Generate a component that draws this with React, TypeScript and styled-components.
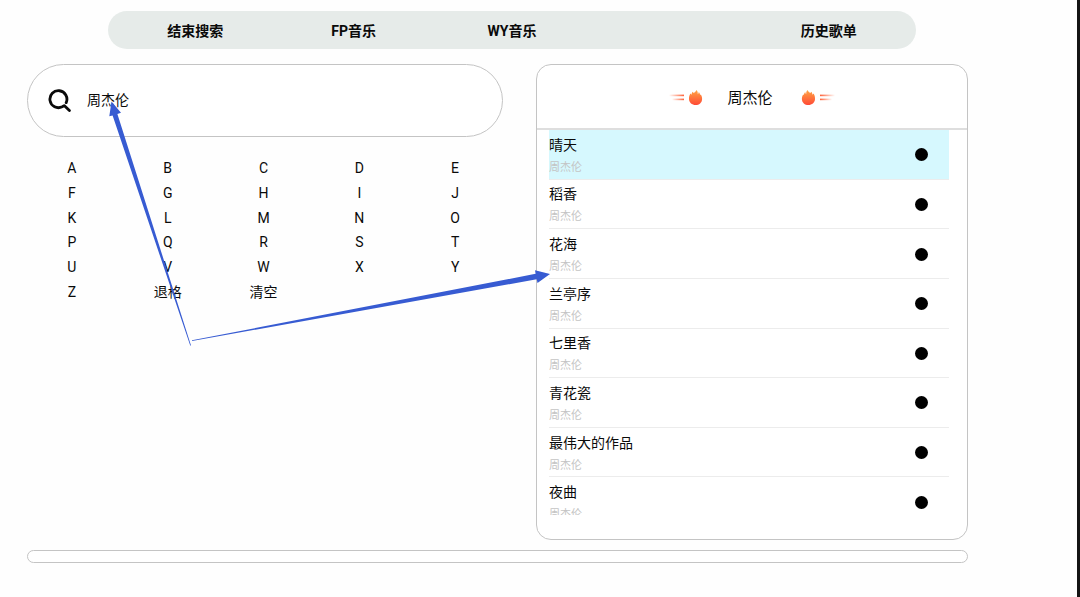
import React, { useState } from "react";
import styled, { createGlobalStyle } from "styled-components";

const GlobalStyle = createGlobalStyle`
  *, *::before, *::after { box-sizing: border-box; }
  body {
    margin: 0;
    background: #fefefe;
    color: #0a0a0a;
    font-family: Roboto, "Noto Sans CJK SC", sans-serif;
    font-size: 14px;
    line-height: 20px;
  }
  button, input { font: inherit; color: inherit; }
`;

const Page = styled.main`
  position: relative;
  min-height: 100vh;
  padding: 11px 109px 24px 24px;
  border-right: 3px solid #141414;
`;

const PlainButton = styled.button`
  padding: 0;
  border: 0;
  background: transparent;
  cursor: pointer;
`;

const NavBar = styled.nav`
  display: grid;
  grid-template-columns: repeat(5, 1fr);
  align-items: center;
  height: 38px;
  margin: 0 52px 0 84px;
  padding: 2px 8px 0;
  border-radius: 19px;
  background: #e6ebe9;
`;

const NavButton = styled(PlainButton)<{ $column: number }>`
  grid-column: ${(p) => p.$column};
  font-weight: 700;
`;

const Columns = styled.div`
  display: grid;
  grid-template-columns: 479fr 432fr;
  gap: 33px;
  margin-top: 15px;
`;

const SearchBox = styled.label`
  display: flex;
  align-items: center;
  gap: 15px;
  height: 73px;
  margin: 0 0 0 3px;
  padding: 0 20px;
  border: 1px solid #c4c4c4;
  border-radius: 37px;
  background: #ffffff;
`;

const SearchInput = styled.input`
  flex: 1;
  min-width: 0;
  padding: 0 0 2px;
  border: 0;
  outline: 0;
  background: transparent;
`;

const Keyboard = styled.div`
  display: grid;
  grid-template-columns: repeat(5, 1fr);
  grid-template-rows: repeat(6, 1fr);
  height: 148px;
  margin-top: 19px;
`;

const Results = styled.section`
  height: 476px;
  border: 1px solid #c4c4c4;
  border-radius: 15px;
  background: #ffffff;
`;

const ResultsHeader = styled.header`
  display: flex;
  align-items: center;
  justify-content: center;
  gap: 24px;
  height: 65px;
  padding-top: 2px;
  border-bottom: 2px solid #dedede;
`;

const ResultsTitle = styled.h2`
  margin: 0;
  padding-right: 4px;
  font-size: 15px;
  font-weight: 400;
`;

const SongViewport = styled.div`
  height: 385px;
  margin: 0 18px 0 12px;
  overflow: hidden;
`;

const SongList = styled.ul`
  display: grid;
  grid-template-rows: repeat(8, 1fr);
  height: 397px;
  margin: 0;
  padding: 0;
  list-style: none;
`;

const SongRow = styled.li<{ $active: boolean }>`
  display: flex;
  align-items: center;
  justify-content: space-between;
  padding: 1px 21px 0 0;
  border-bottom: 1px solid #ececec;
  background: ${(p) => (p.$active ? "#d6f8fe" : "transparent")};
`;

const SongName = styled.div`
  line-height: 26px;
`;

const SongArtist = styled.div`
  color: #c4c4c4;
  font-size: 11px;
  line-height: 20px;
`;

const DotButton = styled(PlainButton)`
  width: 13px;
  height: 13px;
  border-radius: 50%;
  background: #000000;
`;

const PlayerBar = styled.div`
  height: 13px;
  margin: 10px 0 0 3px;
  border: 1px solid #c4c4c4;
  border-radius: 7px;
  background: #ffffff;
`;

const Annotation = styled.svg`
  position: absolute;
  top: 0;
  left: 0;
  pointer-events: none;
`;

const FlameSvg = styled.svg<{ $flip?: boolean }>`
  transform: ${(p) => (p.$flip ? "scaleX(-1)" : "none")};
`;

function Flame({ id, flip }: { id: string; flip?: boolean }) {
  return (
    <FlameSvg $flip={flip} width="34" height="20" viewBox="0 0 34 20" aria-hidden="true">
      <defs>
        <linearGradient id={`${id}-fire`} x1="0" y1="0" x2="0" y2="1">
          <stop offset="0" stopColor="#ffa544" />
          <stop offset="1" stopColor="#ff4a36" />
        </linearGradient>
        <linearGradient id={`${id}-trail`}>
          <stop offset="0" stopColor="#ff6238" stopOpacity="0" />
          <stop offset="1" stopColor="#ff6238" />
        </linearGradient>
      </defs>
      <rect x="0" y="6.600" width="15" height="1.600" fill={`url(#${id}-trail)`} />
      <rect x="3" y="10.600" width="12" height="1.600" fill={`url(#${id}-trail)`} />
      <path
        d="M27.600 2c1 1.200 1.300 2.500 1.200 4.200.6-.5.9-1.200 1-2.200.8.900 1.200 1.800 1.300 3.100l.8-.5c.8 1.500 1.300 3 1.200 4.600-.2 3.500-2.900 5.800-6.500 5.800s-6.400-2.400-6.600-5.800c-.1-2.200.4-4.200 1.500-5.700l1 1.300c.2-1.500.6-2.300 1.300-3.100l.8 1.300c1.200-.6 2.300-1.600 3-3z"
        fill={`url(#${id}-fire)`}
      />
    </FlameSvg>
  );
}

const tabs = [
  { label: "结束搜索", column: 1 },
  { label: "FP音乐", column: 2 },
  { label: "WY音乐", column: 3 },
  { label: "历史歌单", column: 5 },
];

const keys = [..."ABCDEFGHIJKLMNOPQRSTUVWXYZ", "退格", "清空"];

const songs = ["晴天", "稻香", "花海", "兰亭序", "七里香", "青花瓷", "最伟大的作品", "夜曲"];

export default function App() {
  const [query, setQuery] = useState("周杰伦");
  const [active, setActive] = useState(0);

  const press = (key: string) => {
    if (key === "清空") setQuery("");
    else if (key === "退格") setQuery(query.slice(0, -1));
    else setQuery(query + key);
  };

  return (
    <Page>
      <GlobalStyle />
      <NavBar>
        {tabs.map((tab) => (
          <NavButton key={tab.label} type="button" $column={tab.column}>
            {tab.label}
          </NavButton>
        ))}
      </NavBar>

      <Columns>
        <section>
          <SearchBox>
            <svg width="24" height="24" viewBox="0 0 24 24" fill="none" stroke="#0a0a0a" strokeWidth="2.800" strokeLinecap="round" strokeLinejoin="round" aria-hidden="true">
              <path d="M18.200 13.600A8.500 8.500 0 1 0 14.200 17.800L16.200 16.600 21.400 21.600" />
            </svg>
            <SearchInput aria-label="搜索" value={query} onChange={(e) => setQuery(e.target.value)} />
          </SearchBox>
          <Keyboard>
            {keys.map((key) => (
              <PlainButton key={key} type="button" onClick={() => press(key)}>
                {key}
              </PlainButton>
            ))}
          </Keyboard>
        </section>

        <Results>
          <ResultsHeader>
            <Flame id="left" />
            <ResultsTitle>周杰伦</ResultsTitle>
            <Flame id="right" flip />
          </ResultsHeader>
          <SongViewport>
            <SongList>
              {songs.map((song, index) => (
                <SongRow key={song} $active={index === active}>
                  <div>
                    <SongName>{song}</SongName>
                    <SongArtist>周杰伦</SongArtist>
                  </div>
                  <DotButton type="button" aria-label={`播放 ${song}`} onClick={() => setActive(index)} />
                </SongRow>
              ))}
            </SongList>
          </SongViewport>
        </Results>
      </Columns>

      <PlayerBar />

      <Annotation width="560" height="350" viewBox="0 0 560 350" fill="#375bd2" aria-hidden="true">
        <path d="M111.500 101.500 121 112.800 117.400 114 191 345.500 190.200 345.500 112.600 115.400 109.300 116.300z" />
        <path d="M550 274 537.500 283 536.700 279.300 192 341 192 340.300 535.600 273.800 535 270.200z" />
      </Annotation>
    </Page>
  );
}
